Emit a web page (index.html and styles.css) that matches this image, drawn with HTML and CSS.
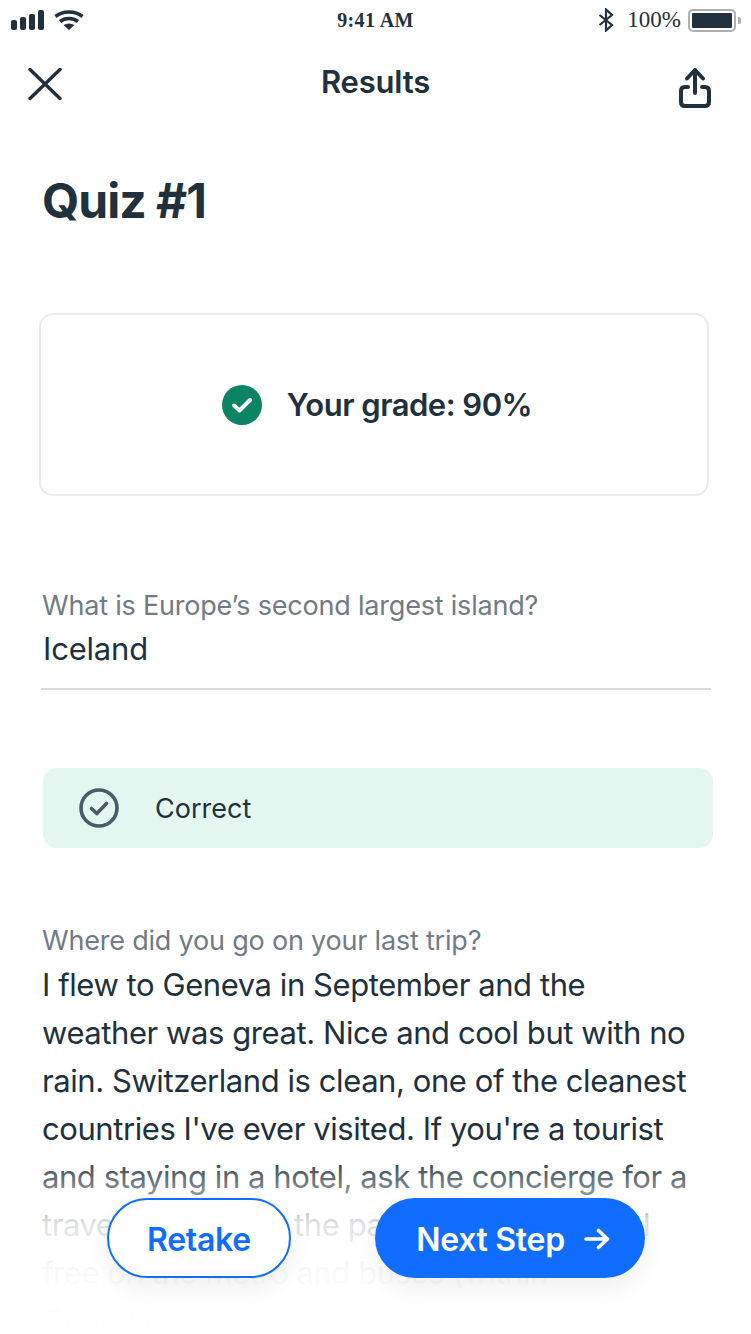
FILE: index.html
```html
<!DOCTYPE html>
<html lang="en">
<head>
    <meta charset="UTF-8">
    <meta name="viewport" content="width=device-width, initial-scale=1.0">
    <title>Results</title>
    <link rel="stylesheet" href="styles.css">
</head>
<body>
<div class="screen">
    <div class="status-bar">
        <div class="status-left">
            <svg width="33" height="20" viewBox="0 0 33 20"><rect x="0" y="10" width="6" height="10" rx="2" fill="#20303c"/><rect x="9" y="7" width="6" height="13" rx="2" fill="#20303c"/><rect x="18" y="4" width="6" height="16" rx="2" fill="#20303c"/><rect x="27" y="0" width="6" height="20" rx="2" fill="#20303c"/></svg>
            <svg width="30" height="20" viewBox="0 0 30 20"><path d="M1.500 6.500C9 0.500 21 0.500 28.500 6.500M6 11.500C11 7.500 19 7.500 24 11.500" fill="none" stroke="#20303c" stroke-width="3.600"/><path d="M9.500 15C13 13 17 13 20.500 15L15 20Z" fill="#20303c"/></svg>
        </div>
        <div class="status-time">9:41 AM</div>
        <div class="status-right">
            <svg width="16" height="24" viewBox="0 0 16 24"><path d="M1.500 7L14 17L8 22.500V1.500L14 7L1.500 17" fill="none" stroke="#20303c" stroke-width="2.200"/></svg>
            <span class="battery-pct">100%</span>
            <div class="battery"><div class="battery-fill"></div></div>
            <div class="battery-tip"></div>
        </div>
    </div>

    <div class="nav">
        <svg class="nav-close" width="34" height="34" viewBox="0 0 34 34"><path d="M2 2.500L32 31.500M32 2.500L2 31.500" stroke="#20303c" stroke-width="3.400" stroke-linecap="round"/></svg>
        <div class="nav-title">Results</div>
        <svg class="nav-share" width="34" height="42" viewBox="0 0 34 42"><path d="M10 20H7C4.500 20 3 21.500 3 24V35C3 37.500 4.500 39 7 39H27C29.500 39 31 37.500 31 35V24C31 21.500 29.500 20 27 20H24M17 26V3M9 11.500L17 3L25 11.500" fill="none" stroke="#20303c" stroke-width="4" stroke-linecap="round" stroke-linejoin="round"/></svg>
    </div>

    <h1 class="page-title">Quiz #1</h1>

    <div class="grade-card">
        <svg width="40" height="40" viewBox="0 0 40 40"><circle cx="20" cy="20" r="20" fill="#0a8463"/><path d="M12 20.500L17.500 25.500L28 15" fill="none" stroke="#fff" stroke-width="4" stroke-linecap="round" stroke-linejoin="round"/></svg>
        <span class="grade-text">Your grade: 90%</span>
    </div>

    <div class="question-short">
        <div class="question-label">What is Europe’s second largest island?</div>
        <div class="answer-short">Iceland</div>
    </div>

    <div class="feedback">
        <svg width="40" height="40" viewBox="0 0 40 40"><circle cx="20" cy="20" r="18" fill="none" stroke="#4b5a66" stroke-width="3.600"/><path d="M12.500 20.500L17.800 25.500L27.500 15.500" fill="none" stroke="#4b5a66" stroke-width="3.600" stroke-linecap="round" stroke-linejoin="round"/></svg>
        <span>Correct</span>
    </div>

    <div class="question-long">
        <div class="question-label">Where did you go on your last trip?</div>
        <p class="answer-long">I flew to Geneva in September and the<br>weather was great. Nice and cool but with no<br>rain. Switzerland is clean, one of the cleanest<br>countries I've ever visited. If you're a tourist<br>and staying in a hotel, ask the concierge for a<br>travel cards, take the parks, and free travel<br>free on the metro and buses (within<br>Geneva.</p>
    </div>

    <div class="fade"></div>

    <div class="actions">
        <button class="btn btn-outline">Retake</button>
        <button class="btn btn-primary">Next Step
            <svg width="26" height="22" viewBox="0 0 26 22"><path d="M2 11H23.500M14.500 2.500L23.500 11L14.500 19.500" fill="none" stroke="#fff" stroke-width="3.600" stroke-linecap="round" stroke-linejoin="round"/></svg>
        </button>
    </div>
</div>
</body>
</html>
```

FILE: styles.css
```css
* {
    box-sizing: border-box;
}
body {
    margin: 0;
    background-color: #fff;
    font-family: Inter, "Noto Sans", sans-serif;
    color: #20303c;
}
.screen {
    position: relative;
    width: 751px;
    height: 1334px;
    overflow: hidden;
    background-color: #fff;
}
.status-bar {
    display: flex;
    justify-content: space-between;
    align-items: center;
    height: 40px;
    padding: 0 10px 0 11px;
    position: relative;
}
.status-left {
    display: flex;
    align-items: center;
    gap: 10px;
}
.status-time {
    position: absolute;
    left: 0;
    right: 0;
    text-align: center;
    font-family: "Liberation Serif", serif;
    font-size: 20px;
    font-weight: bold;
    letter-spacing: 0.4px;
}
.status-right {
    display: flex;
    align-items: center;
}
.battery-pct {
    font-family: "Liberation Serif", serif;
    font-size: 23px;
    margin: 0 7px 0 13px;
}
.battery {
    width: 48px;
    height: 23px;
    border: 2px solid #a9b0b6;
    border-radius: 5px;
    padding: 2px;
}
.battery-fill {
    height: 100%;
    background-color: #20303c;
    border-radius: 1px;
}
.battery-tip {
    width: 3px;
    height: 7px;
    margin-left: 2px;
    background-color: #a9b0b6;
    border-radius: 0 2px 2px 0;
}
.nav {
    display: flex;
    justify-content: space-between;
    align-items: center;
    height: 86px;
    padding: 0 39px 0 28px;
    position: relative;
}
.nav-close {
    margin-top: 2px;
}
.nav-share {
    margin-top: 10px;
}
.nav-title {
    position: absolute;
    left: 0;
    right: 0;
    top: 24px;
    text-align: center;
    font-size: 31px;
    line-height: 36px;
    font-weight: 600;
    letter-spacing: -0.2px;
}
.page-title {
    margin: 46px 0 0 42px;
    font-size: 48px;
    line-height: 58px;
    font-weight: 700;
    letter-spacing: -1px;
}
.grade-card {
    display: flex;
    justify-content: center;
    align-items: center;
    gap: 25px;
    width: 670px;
    height: 183px;
    margin: 83px 0 0 39px;
    padding-left: 6px;
    border: 2px solid #e9ebed;
    border-radius: 14px;
}
.grade-text {
    font-size: 31px;
    font-weight: 600;
    letter-spacing: -0.5px;
}
.question-short {
    margin: 91px 0 0 41px;
    width: 670px;
    height: 103px;
    border-bottom: 2px solid #d7dadd;
    padding-left: 1px;
}
.question-label {
    font-size: 27px;
    line-height: 38px;
    color: #6f7b85;
    letter-spacing: -0.2px;
}
.answer-short {
    margin-left: 1px;
    font-size: 31px;
    line-height: 48px;
    letter-spacing: -0.2px;
}
.feedback {
    display: flex;
    align-items: center;
    gap: 36px;
    width: 670px;
    height: 80px;
    margin: 78px 0 0 43px;
    padding-left: 36px;
    background-color: #e3f6f0;
    border-radius: 14px;
    font-size: 27px;
}
.question-long {
    margin: 74px 0 0 42px;
}
.answer-long {
    margin: 1px 0 0;
    font-size: 31px;
    line-height: 48px;
    letter-spacing: -0.43px;
    white-space: nowrap;
}
.fade {
    position: absolute;
    left: 0;
    right: 0;
    bottom: 0;
    height: 180px;
    background: linear-gradient(to bottom, rgba(255,255,255,0) 0%, rgba(255,255,255,0.85) 38%, rgba(255,255,255,0.97) 65%, rgba(255,255,255,0.99) 85%, #fff 100%);
}
.actions {
    position: absolute;
    left: 107px;
    top: 1198px;
    display: flex;
    gap: 84px;
}
.btn {
    display: flex;
    align-items: center;
    justify-content: center;
    height: 80px;
    padding: 2px 0 0;
    border-radius: 40px;
    font-family: Inter, "Noto Sans", sans-serif;
    font-size: 32px;
    font-weight: 600;
    letter-spacing: -0.3px;
    box-shadow: 0 10px 24px rgba(32, 48, 60, 0.08);
}
.btn-outline {
    width: 184px;
    background-color: #fff;
    border: 2px solid #116dff;
    color: #116dff;
}
.btn-primary {
    width: 270px;
    gap: 19px;
    padding-left: 6px;
    background-color: #116dff;
    border: none;
    color: #fff;
}
```
